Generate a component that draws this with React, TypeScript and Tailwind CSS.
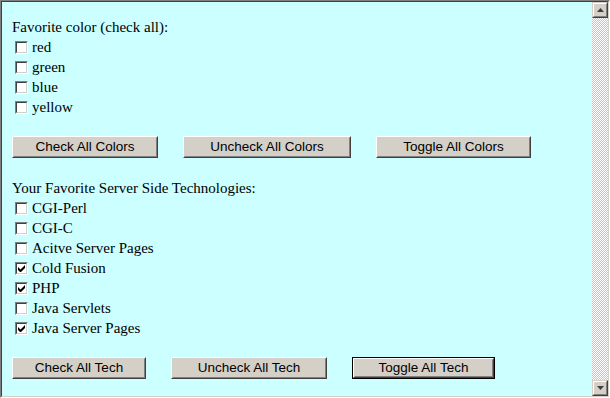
const COLORS = [
  { label: 'red', checked: false },
  { label: 'green', checked: false },
  { label: 'blue', checked: false },
  { label: 'yellow', checked: false },
];

const TECH = [
  { label: 'CGI-Perl', checked: false },
  { label: 'CGI-C', checked: false },
  { label: 'Acitve Server Pages', checked: false },
  { label: 'Cold Fusion', checked: true },
  { label: 'PHP', checked: true },
  { label: 'Java Servlets', checked: false },
  { label: 'Java Server Pages', checked: true },
];

function Box({ checked }: { checked: boolean }) {
  return (
    <span className="border border-t-[#808080] border-l-[#808080] border-b-white border-r-white">
      <span className="flex h-[11px] w-[11px] items-center justify-center border border-t-[#404040] border-l-[#404040] border-b-[#d4d0c8] border-r-[#d4d0c8] bg-white">
        {checked && (
          <svg width="7" height="7" viewBox="0 0 7 7">
            <path d="M0 2v3l2 2h1l4-4V0L2.5 4.5z" fill="#000" />
          </svg>
        )}
      </span>
    </span>
  );
}

function Item({ label, checked }: { label: string; checked: boolean }) {
  return (
    <label className="flex h-5 items-center gap-[4px] pl-[3px]">
      <Box checked={checked} />
      <span>{label}</span>
    </label>
  );
}

function Btn({ label, w, focus }: { label: string; w: string; focus?: boolean }) {
  return (
    <button
      className={`h-[22px] ${w} ${focus ? 'border border-black' : ''} font-['Liberation_Sans',Arial,sans-serif] text-[13.5px] text-black`}
    >
      <span className="flex h-full w-full items-center justify-center border border-t-white border-l-white border-b-[#404040] border-r-[#404040] bg-[#d4d0c8]">
        <span className="flex h-full w-full items-center justify-center border border-t-[#d4d0c8] border-l-[#d4d0c8] border-b-[#808080] border-r-[#808080]">
          {label}
        </span>
      </span>
    </button>
  );
}

function Arrow({ up }: { up?: boolean }) {
  return (
    <div className="h-[16px] w-[16px] border border-t-[#d4d0c8] border-l-[#d4d0c8] border-b-[#404040] border-r-[#404040] bg-[#d4d0c8]">
      <div className="flex h-full w-full items-center justify-center border border-t-white border-l-white border-b-[#808080] border-r-[#808080]">
        <svg width="7" height="4" viewBox="0 0 7 4">
          <path d={up ? 'M3.5 0L7 4H0z' : 'M0 0h7L3.5 4z'} fill="#404040" />
        </svg>
      </div>
    </div>
  );
}

export default function App() {
  return (
    <div className="h-[398px] w-[610px] border border-t-[#808080] border-l-[#808080] border-b-white border-r-white">
      <div className="flex h-full w-full border border-t-[#404040] border-l-[#404040] border-b-[#d4d0c8] border-r-[#d4d0c8]">
        <main className="flex-1 bg-[#ccffff] pl-[10px] pt-[15px] font-['Liberation_Serif','Times_New_Roman',serif] text-[15px] leading-5 text-black">
          <div>Favorite color (check all):</div>
          {COLORS.map((c) => (
            <Item key={c.label} {...c} />
          ))}
          <div className="mt-[19px] flex gap-[25px]">
            <Btn label="Check All Colors" w="w-[146px]" />
            <Btn label="Uncheck All Colors" w="w-[168px]" />
            <Btn label="Toggle All Colors" w="w-[155px]" />
          </div>
          <div className="mt-5">Your Favorite Server Side Technologies:</div>
          {TECH.map((t) => (
            <Item key={t.label} {...t} />
          ))}
          <div className="mt-[19px] flex gap-[25px]">
            <Btn label="Check All Tech" w="w-[134px]" />
            <Btn label="Uncheck All Tech" w="w-[156px]" />
            <Btn label="Toggle All Tech" w="w-[143px]" focus />
          </div>
        </main>
        <aside className="flex w-[16px] flex-col">
          <Arrow up />
          <div className="flex-1 bg-[repeating-conic-gradient(#c8c4bc_0_25%,#ffffff_0_50%)] bg-[length:2px_2px]" />
          <Arrow />
        </aside>
      </div>
    </div>
  );
}
